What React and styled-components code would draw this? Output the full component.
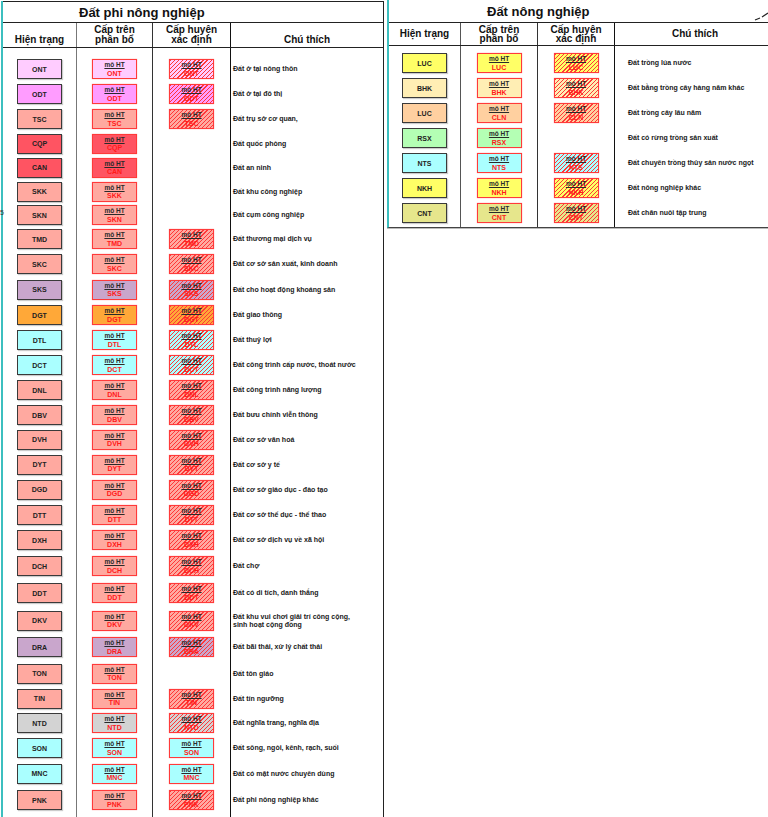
import React from 'react'
import styled, { createGlobalStyle } from 'styled-components'

const GlobalStyle = createGlobalStyle`
  html, body {
    margin: 0;
    padding: 0;
    background: #fff;
    overflow: hidden;
  }
  body {
    font-family: "Liberation Sans", Arial, sans-serif;
    color: #222;
  }
`

const fill = {
  ont: '#ffccff',
  odt: '#ff9cff',
  salmon: '#ffa9a0',
  red: '#ff5462',
  violet: '#c9a6cc',
  orange: '#ffa838',
  cyan: '#aaffff',
  gray: '#d3d3d3',
  yellow: '#ffff66',
  cream: '#ffeeb4',
  peach: '#ffd0a0',
  green: '#b4ffb4',
  khaki: '#e6e68c',
}

const nonAgri = [
  { code: 'ONT', color: fill.ont, plan: 'hatch', h: 25, note: 'Đất ở tại nông thôn' },
  { code: 'ODT', color: fill.odt, plan: 'hatch', h: 25, note: 'Đất ở tại đô thị' },
  { code: 'TSC', color: fill.salmon, plan: 'hatch', h: 25, note: 'Đất trụ sở cơ quan,' },
  { code: 'CQP', color: fill.red, h: 24.5, note: 'Đất quốc phòng' },
  { code: 'CAN', color: fill.red, h: 23.75, note: 'Đất an ninh' },
  { code: 'SKK', color: fill.salmon, h: 23.5, note: 'Đất khu công nghiệp' },
  { code: 'SKN', color: fill.salmon, h: 23.75, note: 'Đất cụm công nghiệp' },
  { code: 'TMD', color: fill.salmon, plan: 'hatch', h: 24.5, note: 'Đất thương mại dịch vụ' },
  { code: 'SKC', color: fill.salmon, plan: 'hatch', h: 25.5, note: 'Đất cơ sở sản xuất, kinh doanh' },
  { code: 'SKS', color: fill.violet, plan: 'hatch', h: 25.5, note: 'Đất cho hoạt động khoáng sản' },
  { code: 'DGT', color: fill.orange, plan: 'hatch', h: 25, note: 'Đất giao thông' },
  { code: 'DTL', color: fill.cyan, plan: 'hatch', h: 25, note: 'Đất thuỷ lợi' },
  { code: 'DCT', color: fill.cyan, plan: 'hatch', h: 25, note: 'Đất công trình cấp nước, thoát nước' },
  { code: 'DNL', color: fill.salmon, plan: 'hatch', h: 25, note: 'Đất công trình năng lượng' },
  { code: 'DBV', color: fill.salmon, plan: 'hatch', h: 25, note: 'Đất bưu chính viễn thông' },
  { code: 'DVH', color: fill.salmon, plan: 'hatch', h: 24.5, note: 'Đất cơ sở văn hoá' },
  { code: 'DYT', color: fill.salmon, plan: 'hatch', h: 25, note: 'Đất cơ sở y tế' },
  { code: 'DGD', color: fill.salmon, plan: 'hatch', h: 25.5, note: 'Đất cơ sở giáo dục - đào tạo' },
  { code: 'DTT', color: fill.salmon, plan: 'hatch', h: 25, note: 'Đất cơ sở thể dục - thể thao' },
  { code: 'DXH', color: fill.salmon, plan: 'hatch', h: 25.25, note: 'Đất cơ sở dịch vụ về xã hội' },
  { code: 'DCH', color: fill.salmon, plan: 'hatch', h: 26.5, note: 'Đất chợ' },
  { code: 'DDT', color: fill.salmon, plan: 'hatch', h: 27.75, note: 'Đất có di tích, danh thắng' },
  { code: 'DKV', color: fill.salmon, plan: 'hatch', h: 27, note: ['Đất khu vui chơi giải trí công cộng,', 'sinh hoạt cộng đồng'] },
  { code: 'DRA', color: fill.violet, plan: 'hatch', h: 26.5, note: 'Đất bãi thải, xử lý chất thải' },
  { code: 'TON', color: fill.salmon, h: 26, note: 'Đất tôn giáo' },
  { code: 'TIN', color: fill.salmon, plan: 'hatch', h: 24.5, note: 'Đất tín ngưỡng' },
  { code: 'NTD', color: fill.gray, plan: 'hatch', h: 24.5, note: 'Đất nghĩa trang, nghĩa địa' },
  { code: 'SON', color: fill.cyan, plan: 'plain', h: 25, note: 'Đất sông, ngòi, kênh, rạch, suối' },
  { code: 'MNC', color: fill.cyan, plan: 'plain', h: 26, note: 'Đất có mặt nước chuyên dùng' },
  { code: 'PNK', color: fill.salmon, plan: 'hatch', h: 27, note: 'Đất phi nông nghiệp khác' },
]

const agri = [
  { code: 'LUC', color: fill.yellow, plan: 'hatch', h: 25, note: 'Đất trồng lúa nước' },
  { code: 'BHK', color: fill.cream, plan: 'hatch', h: 25, note: 'Đất bằng trồng cây hàng năm khác' },
  { code: 'LUC', upper: 'CLN', color: fill.peach, plan: 'hatch', h: 25, note: 'Đất trồng cây lâu năm' },
  { code: 'RSX', color: fill.green, h: 25, note: 'Đất có rừng trồng sản xuất' },
  { code: 'NTS', color: fill.cyan, plan: 'hatch', h: 25, note: 'Đất chuyên trồng thủy sản nước ngọt' },
  { code: 'NKH', color: fill.yellow, plan: 'hatch', h: 25, note: 'Đất nông nghiệp khác' },
  { code: 'CNT', color: fill.khaki, plan: 'hatch', h: 25, note: 'Đất chăn nuôi tập trung' },
]

const leftLines = ['1.5px solid #777', '1px solid #333', '1.5px solid #111', '1px solid #222']
const rightLines = ['1.5px solid #555', '1px solid #333', '1.5px solid #111', 'none']

const Page = styled.div`
  position: relative;
  display: flex;
  align-items: flex-start;
  gap: 3px;
  padding-left: 1px;
  width: max-content;
`

const Section = styled.section`
  box-sizing: border-box;
  margin-top: ${p => p.$top}px;
  width: ${p => p.$width}px;
  border-left: 2px solid #3cbfbf;
  border-bottom: ${p => (p.$closed ? '1.5px solid #444' : 'none')};
  box-shadow: ${p => (p.$closed ? '0 1px 0 #bbb' : 'none')};
`

const TitleRow = styled.div`
  position: relative;
  box-sizing: border-box;
  height: ${p => p.$h}px;
  border-top: ${p => (p.$topLine ? '1px solid #222' : 'none')};
  border-right: ${p => (p.$rightLine ? '1px solid #222' : 'none')};
  border-bottom: 1px solid #222;
  padding-left: ${p => p.$indent}px;
  display: flex;
  align-items: center;
  font-size: 13px;
  font-weight: bold;
  color: #111;
`

const Grid = styled.div`
  box-sizing: border-box;
  display: grid;
  grid-template-columns: ${p => p.$cols};
  height: ${p => p.$h}px;
  border-bottom: ${p => (p.$underline ? '1px solid #222' : 'none')};
`

const Cell = styled.div`
  box-sizing: border-box;
  display: flex;
  align-items: center;
  justify-content: center;
  min-width: 0;
  border-right: ${p => p.$line};
`

const HeadCell = styled(Cell)`
  align-items: ${p => p.$align};
  padding-bottom: ${p => (p.$align === 'flex-end' ? 3 : 0)}px;
  text-align: center;
  font-size: 10px;
  line-height: 9.5px;
  font-weight: bold;
  color: #111;
`

const NoteCell = styled(Cell)`
  justify-content: flex-start;
  padding-left: ${p => p.$pad}px;
  font-size: 7px;
  line-height: 8px;
  font-weight: bold;
  color: #1a1a1a;
  white-space: nowrap;
`

const Swatch = styled.div`
  box-sizing: border-box;
  width: 45px;
  height: 20px;
  display: flex;
  align-items: center;
  justify-content: center;
  background: ${p => p.$color};
  border: 1.5px solid #3a3a3a;
  box-shadow: 1px 1px 1px rgba(0, 0, 0, 0.2);
  font-size: 7px;
  font-weight: bold;
  color: #222;
`

const Tag = styled.div`
  box-sizing: border-box;
  width: 45px;
  height: 20px;
  display: flex;
  flex-direction: column;
  align-items: center;
  justify-content: center;
  padding-top: 1px;
  background: ${p =>
    p.$hatch
      ? `repeating-linear-gradient(135deg, #ff3838 0 1px, ${p.$color} 1px 2.9px)`
      : p.$color};
  border: 1.5px solid #ff3a3a;
  box-shadow: 0 0 1px #ff8a8a;
  font-weight: bold;
  line-height: 8.5px;
`

const TagLabel = styled.span`
  font-size: 6.5px;
  color: #2a2a2a;
  text-decoration: underline;
`

const TagCode = styled.span`
  font-size: 7px;
  color: #ff1a1a;
`

const Stray = styled.span`
  position: absolute;
  left: 0;
  top: 209px;
  font-size: 7px;
  color: #333;
`

const Mark = styled.svg`
  position: absolute;
  left: 365px;
  top: 11px;
`

function Header({ cols, lines, h, align }) {
  return (
    <Grid $cols={cols} $h={h} $underline>
      <HeadCell $line={lines[0]} $align={align}>Hiện trạng</HeadCell>
      <HeadCell $line={lines[1]} $align={align}>Cấp trên<br />phân bổ</HeadCell>
      <HeadCell $line={lines[2]} $align={align}>Cấp huyện<br />xác định</HeadCell>
      <HeadCell $line={lines[3]} $align={align}>Chú thích</HeadCell>
    </Grid>
  )
}

function Spacer({ cols, lines, h }) {
  return (
    <Grid $cols={cols} $h={h}>
      {lines.map((l, i) => <Cell key={i} $line={l} />)}
    </Grid>
  )
}

function LegendRow({ item, cols, lines, pad }) {
  const upper = item.upper || item.code
  return (
    <Grid $cols={cols} $h={item.h}>
      <Cell $line={lines[0]}>
        <Swatch $color={item.color}>{item.code}</Swatch>
      </Cell>
      <Cell $line={lines[1]}>
        <Tag $color={item.color}>
          <TagLabel>mô HT</TagLabel>
          <TagCode>{upper}</TagCode>
        </Tag>
      </Cell>
      <Cell $line={lines[2]}>
        {item.plan && (
          <Tag $color={item.color} $hatch={item.plan === 'hatch'}>
            <TagLabel>mô HT</TagLabel>
            <TagCode>{upper}</TagCode>
          </Tag>
        )}
      </Cell>
      <NoteCell $line={lines[3]} $pad={pad}>
        {Array.isArray(item.note)
          ? <span>{item.note[0]}<br />{item.note[1]}</span>
          : item.note}
      </NoteCell>
    </Grid>
  )
}

export default function App() {
  const leftCols = '74px 76px 78px 153px'
  const rightCols = '72px 77px 77px 160px'

  return (
    <Page>
      <GlobalStyle />
      <Section $width={383} $top={1}>
        <TitleRow $h={22} $indent={76} $topLine $rightLine>Đất phi nông nghiệp</TitleRow>
        <Header cols={leftCols} lines={leftLines} h={25} align="flex-end" />
        <Spacer cols={leftCols} lines={leftLines} h={8.5} />
        {nonAgri.map(item => (
          <LegendRow key={item.code} item={item} cols={leftCols} lines={leftLines} pad={2} />
        ))}
        <Spacer cols={leftCols} lines={leftLines} h={20} />
      </Section>

      <Section $width={388} $top={0} $closed>
        <TitleRow $h={23} $indent={98}>
          Đất nông nghiệp
          <Mark width="16" height="10" viewBox="0 0 16 10">
            <path d="M1 9 L6 7 M8 6 L14 2" stroke="#222" strokeWidth="1.2" fill="none" />
          </Mark>
        </TitleRow>
        <Header cols={rightCols} lines={rightLines} h={23} align="center" />
        <Spacer cols={rightCols} lines={rightLines} h={4.5} />
        {agri.map((item, i) => (
          <LegendRow key={i} item={item} cols={rightCols} lines={rightLines} pad={13} />
        ))}
        <Spacer cols={rightCols} lines={rightLines} h={1.5} />
      </Section>

      <Stray>5</Stray>
    </Page>
  )
}
